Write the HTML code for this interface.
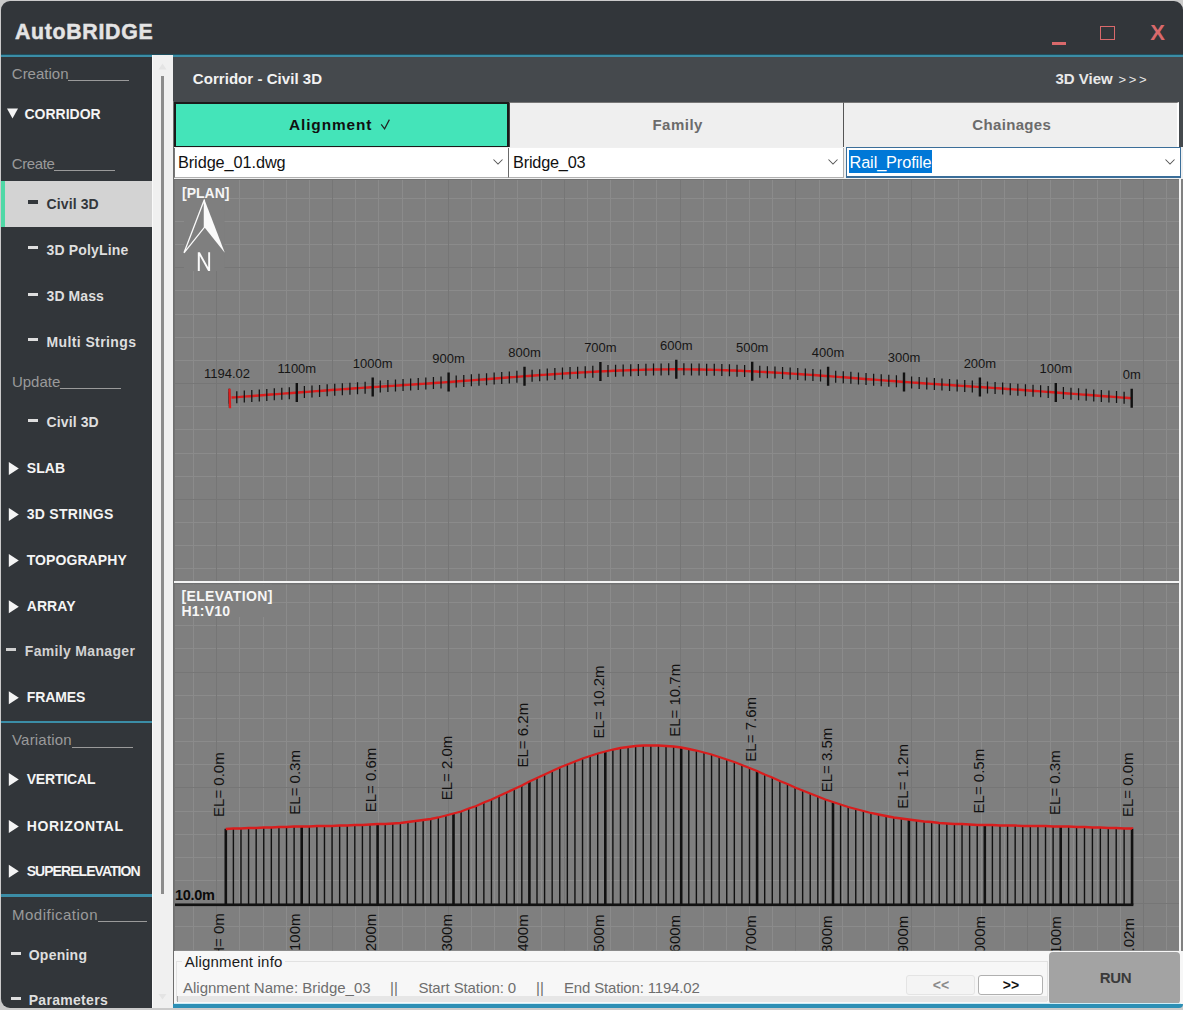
<!DOCTYPE html>
<html><head><meta charset="utf-8"><style>
html,body{margin:0;padding:0;}
body{width:1183px;height:1010px;position:relative;overflow:hidden;background:#cbcbcb;font-family:"Liberation Sans", sans-serif;}
</style></head><body>
<div style="position:absolute;left:1px;top:1px;width:1182px;height:1007px;background:#32363a;border-radius:9px;"></div>
<div style="position:absolute;left:14.9px;top:22.47px;font-size:21.3px;line-height:21.3px;color:#e4e4e4;font-weight:bold;white-space:nowrap;letter-spacing:0.72px;-webkit-text-stroke:0.5px #e4e4e4;">AutoBRIDGE</div>
<div style="position:absolute;left:1px;top:53.5px;width:1182px;height:1.2px;background:#1f4f5e;"></div>
<div style="position:absolute;left:1px;top:54.7px;width:1182px;height:2.7px;background:#3b8da6;"></div>
<div style="position:absolute;left:1052px;top:42px;width:14px;height:3px;background:#d9696b;"></div>
<div style="position:absolute;left:1100px;top:26px;width:12.5px;height:11.5px;background:transparent;border:1.7px solid #d9696b;"></div>
<svg style="position:absolute;left:0;top:0" width="1183" height="60"><text x="1150.2" y="40.2" font-family="Liberation Sans" font-weight="bold" font-size="22" fill="#d9696b">X</text></svg>
<div style="position:absolute;left:11.8px;top:66.00px;font-size:15px;line-height:15px;color:#9a9a9a;font-weight:normal;white-space:nowrap;">Creation</div>
<div style="position:absolute;left:68.4px;top:80px;width:60.19999999999999px;height:1px;background:#9a9a9a;"></div>
<svg style="position:absolute;left:0;top:0" width="160" height="1010"><path d="M7,108.5 L18,108.5 L12.5,118.5 Z" fill="#f4f4f4"/></svg>
<div style="position:absolute;left:24.5px;top:106.95px;font-size:14px;line-height:14px;color:#f4f4f4;font-weight:bold;white-space:nowrap;">CORRIDOR</div>
<div style="position:absolute;left:11.8px;top:156.00px;font-size:15px;line-height:15px;color:#9a9a9a;font-weight:normal;white-space:nowrap;letter-spacing:-0.4px;">Create</div>
<div style="position:absolute;left:54.3px;top:170px;width:60.7px;height:1px;background:#9a9a9a;"></div>
<div style="position:absolute;left:1px;top:181px;width:151px;height:46px;background:#d3d3d3;"></div>
<div style="position:absolute;left:1px;top:181px;width:4px;height:46px;background:#4fd8a6;"></div>
<div style="position:absolute;left:28px;top:200px;width:10px;height:4px;background:#33373b;"></div>
<div style="position:absolute;left:46.5px;top:196.95px;font-size:14px;line-height:14px;color:#33373b;font-weight:bold;white-space:nowrap;letter-spacing:0.12px;">Civil 3D</div>
<div style="position:absolute;left:28px;top:246.10000000000002px;width:10px;height:3.3px;background:#dedede;"></div>
<div style="position:absolute;left:46.5px;top:242.95px;font-size:14px;line-height:14px;color:#dedede;font-weight:bold;white-space:nowrap;letter-spacing:0.16px;">3D PolyLine</div>
<div style="position:absolute;left:28px;top:292.5px;width:10px;height:3.3px;background:#dedede;"></div>
<div style="position:absolute;left:46.5px;top:289.35px;font-size:14px;line-height:14px;color:#dedede;font-weight:bold;white-space:nowrap;letter-spacing:0.1px;">3D Mass</div>
<div style="position:absolute;left:28px;top:338.1px;width:10px;height:3.3px;background:#dedede;"></div>
<div style="position:absolute;left:46.5px;top:334.95px;font-size:14px;line-height:14px;color:#dedede;font-weight:bold;white-space:nowrap;letter-spacing:0.39px;">Multi Strings</div>
<div style="position:absolute;left:11.9px;top:373.90px;font-size:15px;line-height:15px;color:#9a9a9a;font-weight:normal;white-space:nowrap;">Update</div>
<div style="position:absolute;left:59.9px;top:388.2px;width:60.9px;height:1px;background:#9a9a9a;"></div>
<div style="position:absolute;left:28px;top:418.6px;width:10px;height:3.3px;background:#dedede;"></div>
<div style="position:absolute;left:46.5px;top:415.45px;font-size:14px;line-height:14px;color:#dedede;font-weight:bold;white-space:nowrap;letter-spacing:0.12px;">Civil 3D</div>
<svg style="position:absolute;left:0;top:0" width="160" height="1010"><path d="M8.8,462 L18.8,468.5 L8.8,475 Z" fill="#f4f4f4"/></svg>
<div style="position:absolute;left:26.7px;top:461.15px;font-size:14px;line-height:14px;color:#f4f4f4;font-weight:bold;white-space:nowrap;letter-spacing:0.1px;">SLAB</div>
<svg style="position:absolute;left:0;top:0" width="160" height="1010"><path d="M8.8,507.9 L18.8,514.4 L8.8,520.9 Z" fill="#f4f4f4"/></svg>
<div style="position:absolute;left:26.7px;top:507.05px;font-size:14px;line-height:14px;color:#f4f4f4;font-weight:bold;white-space:nowrap;letter-spacing:0.3px;">3D STRINGS</div>
<svg style="position:absolute;left:0;top:0" width="160" height="1010"><path d="M8.8,553.9 L18.8,560.4 L8.8,566.9 Z" fill="#f4f4f4"/></svg>
<div style="position:absolute;left:26.7px;top:553.05px;font-size:14px;line-height:14px;color:#f4f4f4;font-weight:bold;white-space:nowrap;letter-spacing:0.08px;">TOPOGRAPHY</div>
<svg style="position:absolute;left:0;top:0" width="160" height="1010"><path d="M8.8,600.2 L18.8,606.7 L8.8,613.2 Z" fill="#f4f4f4"/></svg>
<div style="position:absolute;left:26.7px;top:599.35px;font-size:14px;line-height:14px;color:#f4f4f4;font-weight:bold;white-space:nowrap;letter-spacing:0.08px;">ARRAY</div>
<div style="position:absolute;left:6px;top:648px;width:10px;height:3px;background:#d0d0d0;"></div>
<div style="position:absolute;left:24.8px;top:644.35px;font-size:14px;line-height:14px;color:#d2d2d2;font-weight:bold;white-space:nowrap;letter-spacing:0.33px;">Family Manager</div>
<svg style="position:absolute;left:0;top:0" width="160" height="1010"><path d="M8.8,691.3 L18.8,697.8 L8.8,704.3 Z" fill="#f4f4f4"/></svg>
<div style="position:absolute;left:26.7px;top:690.45px;font-size:14px;line-height:14px;color:#f4f4f4;font-weight:bold;white-space:nowrap;letter-spacing:-0.08px;">FRAMES</div>
<div style="position:absolute;left:1px;top:720.5px;width:151px;height:2.8px;background:#3b8da6;"></div>
<div style="position:absolute;left:12px;top:732.30px;font-size:15px;line-height:15px;color:#9a9a9a;font-weight:normal;white-space:nowrap;letter-spacing:0.2px;">Variation</div>
<div style="position:absolute;left:72.4px;top:746.8px;width:60.19999999999999px;height:1px;background:#9a9a9a;"></div>
<svg style="position:absolute;left:0;top:0" width="160" height="1010"><path d="M8.8,773 L18.8,779.5 L8.8,786 Z" fill="#f4f4f4"/></svg>
<div style="position:absolute;left:26.7px;top:772.15px;font-size:14px;line-height:14px;color:#f4f4f4;font-weight:bold;white-space:nowrap;letter-spacing:-0.16px;">VERTICAL</div>
<svg style="position:absolute;left:0;top:0" width="160" height="1010"><path d="M8.8,820 L18.8,826.5 L8.8,833 Z" fill="#f4f4f4"/></svg>
<div style="position:absolute;left:26.7px;top:819.15px;font-size:14px;line-height:14px;color:#f4f4f4;font-weight:bold;white-space:nowrap;letter-spacing:0.64px;">HORIZONTAL</div>
<svg style="position:absolute;left:0;top:0" width="160" height="1010"><path d="M8.8,864.8 L18.8,871.3 L8.8,877.8 Z" fill="#f4f4f4"/></svg>
<div style="position:absolute;left:26.7px;top:863.95px;font-size:14px;line-height:14px;color:#f4f4f4;font-weight:bold;white-space:nowrap;letter-spacing:-0.95px;">SUPERELEVATION</div>
<div style="position:absolute;left:1px;top:893.8px;width:151px;height:2.8px;background:#3b8da6;"></div>
<div style="position:absolute;left:12px;top:906.60px;font-size:15px;line-height:15px;color:#9a9a9a;font-weight:normal;white-space:nowrap;letter-spacing:0.5px;">Modification</div>
<div style="position:absolute;left:97.6px;top:921px;width:49.400000000000006px;height:1px;background:#9a9a9a;"></div>
<div style="position:absolute;left:11px;top:952px;width:10px;height:3px;background:#dedede;"></div>
<div style="position:absolute;left:28.7px;top:947.85px;font-size:14px;line-height:14px;color:#dedede;font-weight:bold;white-space:nowrap;letter-spacing:0.25px;">Opening</div>
<div style="position:absolute;left:11px;top:997px;width:10px;height:3px;background:#dedede;"></div>
<div style="position:absolute;left:28.7px;top:992.55px;font-size:14px;line-height:14px;color:#dedede;font-weight:bold;white-space:nowrap;letter-spacing:0.3px;">Parameters</div>
<div style="position:absolute;left:152px;top:54.8px;width:21px;height:953.2px;background:#f0f0f0;"></div>
<div style="position:absolute;left:152px;top:54.8px;width:0.8px;height:953.2px;background:#fafafa;"></div>
<div style="position:absolute;left:161px;top:76px;width:3px;height:818px;background:#8c8c8c;"></div>
<svg style="position:absolute;left:0;top:0" width="180" height="1010"><path d="M158.5,69.5 L162.5,63.5 L166.5,69.5 Z" fill="#e4e4e4"/><path d="M158.5,994 L162.5,999.5 L166.5,994 Z" fill="#e4e4e4"/></svg>
<div style="position:absolute;left:173px;top:57px;width:1010px;height:44.5px;background:#45494d;"></div>
<div style="position:absolute;left:192.8px;top:71.00px;font-size:15px;line-height:15px;color:#f2f2f2;font-weight:bold;white-space:nowrap;letter-spacing:0.05px;">Corridor - Civil 3D</div>
<div style="position:absolute;left:1055.5px;top:71.00px;font-size:15px;line-height:15px;color:#e8e8e8;font-weight:bold;white-space:nowrap;">3D View</div>
<div style="position:absolute;left:1118.5px;top:72.50px;font-size:13px;line-height:13px;color:#e8e8e8;font-weight:normal;white-space:nowrap;letter-spacing:-0.45px;">&gt; &gt; &gt;</div>
<div style="position:absolute;left:173px;top:101.5px;width:1010px;height:46px;background:#45494d;"></div>
<div style="position:absolute;left:174px;top:101.5px;width:335px;height:46.3px;background:#44e4b9;box-sizing:border-box;border:2px solid #1a1a1a;"></div>
<div style="position:absolute;left:289px;top:116.66px;font-size:15.4px;line-height:15.4px;color:#111;font-weight:bold;white-space:nowrap;letter-spacing:0.9px;">Alignment</div>
<svg style="position:absolute;left:0;top:0" width="400" height="150"><path d="M381.2,124.3 L384.6,128.9 L389.4,119.6" stroke="#222" stroke-width="1.2" fill="none"/></svg>
<div style="position:absolute;left:509px;top:101.5px;width:335px;height:46.3px;background:#efefef;box-sizing:border-box;border-top:1px solid #777;border-left:1px solid #444;border-bottom:1.5px solid #6a6a6a;"></div>
<div style="position:absolute;left:652.4px;top:116.90px;font-size:15px;line-height:15px;color:#6b6b6b;font-weight:bold;white-space:nowrap;letter-spacing:0.5px;">Family</div>
<div style="position:absolute;left:843px;top:101.5px;width:336px;height:46.3px;background:#efefef;box-sizing:border-box;border-top:1px solid #777;border-left:1.6px solid #555;border-right:2px solid #fff;border-bottom:1.5px solid #6a6a6a;"></div>
<div style="position:absolute;left:972.3px;top:117.20px;font-size:15px;line-height:15px;color:#6b6b6b;font-weight:bold;white-space:nowrap;letter-spacing:0.34px;">Chainages</div>
<div style="position:absolute;left:173px;top:147px;width:1010px;height:32px;background:#f0f0f0;"></div>
<div style="position:absolute;left:174px;top:147.5px;width:335px;height:30.5px;background:#fff;box-sizing:border-box;border:1px solid #b0b0b0;border-top:none;border-left:1.5px solid #777;"></div>
<div style="position:absolute;left:178px;top:153.80px;font-size:16.3px;line-height:16.3px;color:#111;font-weight:normal;white-space:nowrap;letter-spacing:-0.08px;">Bridge_01.dwg</div>
<svg style="position:absolute;left:0;top:0" width="1183" height="200"><path d="M493.5,159.5 L498.0,164.0 L502.5,159.5" stroke="#555" stroke-width="1.05" fill="none"/></svg>
<div style="position:absolute;left:508.3px;top:147.5px;width:335.5px;height:30.5px;background:#fff;box-sizing:border-box;border:1px solid #b0b0b0;border-top:none;border-left:1.6px solid #6a6a6a;"></div>
<div style="position:absolute;left:513px;top:153.80px;font-size:16.3px;line-height:16.3px;color:#111;font-weight:normal;white-space:nowrap;letter-spacing:-0.2px;">Bridge_03</div>
<svg style="position:absolute;left:0;top:0" width="1183" height="200"><path d="M828.5,159.5 L833.0,164.0 L837.5,159.5" stroke="#555" stroke-width="1.05" fill="none"/></svg>
<div style="position:absolute;left:846px;top:146.5px;width:334.5px;height:31px;background:#fff;box-sizing:border-box;border:1px solid #3b6e99;border-bottom:2px solid #3b6e99;"></div>
<div style="position:absolute;left:849px;top:150px;width:82.5px;height:22.5px;background:#0078d7;"></div>
<div style="position:absolute;left:849.5px;top:153.80px;font-size:16.3px;line-height:16.3px;color:#fff;font-weight:normal;white-space:nowrap;letter-spacing:-0.1px;">Rail_Profile</div>
<svg style="position:absolute;left:0;top:0" width="1183" height="200"><path d="M1165.5,159.5 L1170.0,164.0 L1174.5,159.5" stroke="#555" stroke-width="1.05" fill="none"/></svg>
<svg style="position:absolute;left:0;top:0" width="1183" height="1010" font-family='"Liberation Sans", sans-serif'><rect x="174" y="179" width="1006" height="403" fill="#737373"/><rect x="175" y="180" width="1004" height="401" fill="#7f7f7f"/><rect x="174" y="581" width="1006" height="2.3" fill="#f4f4f4"/><rect x="174" y="583.3" width="1006" height="368" fill="#737373"/><rect x="175" y="584.5" width="1004" height="366" fill="#7f7f7f"/><rect x="1179" y="179" width="2" height="825" fill="#f4f4f4"/><rect x="1181" y="179" width="2" height="825" fill="#808080"/><path d="M193.5,180 V581 M239.5,180 V581 M263.5,180 V581 M286.5,180 V581 M309.5,180 V581 M355.5,180 V581 M378.5,180 V581 M402.5,180 V581 M425.5,180 V581 M471.5,180 V581 M494.5,180 V581 M517.5,180 V581 M541.5,180 V581 M587.5,180 V581 M610.5,180 V581 M633.5,180 V581 M656.5,180 V581 M703.5,180 V581 M726.5,180 V581 M749.5,180 V581 M772.5,180 V581 M819.5,180 V581 M842.5,180 V581 M865.5,180 V581 M888.5,180 V581 M934.5,180 V581 M958.5,180 V581 M981.5,180 V581 M1004.5,180 V581 M1050.5,180 V581 M1073.5,180 V581 M1097.5,180 V581 M1120.5,180 V581 M1166.5,180 V581 M175,198.5 H1179 M175,221.5 H1179 M175,244.5 H1179 M175,290.5 H1179 M175,314.5 H1179 M175,337.5 H1179 M175,360.5 H1179 M175,406.5 H1179 M175,429.5 H1179 M175,453.5 H1179 M175,476.5 H1179 M175,522.5 H1179 M175,545.5 H1179 M175,568.5 H1179" stroke="#8b8b8b" stroke-width="1" fill="none"/><path d="M216.5,180 V581 M332.5,180 V581 M448.5,180 V581 M564.5,180 V581 M680.5,180 V581 M795.5,180 V581 M911.5,180 V581 M1027.5,180 V581 M1143.5,180 V581 M175,267.5 H1179 M175,383.5 H1179 M175,499.5 H1179" stroke="#767676" stroke-width="1" fill="none"/><path d="M193.5,584.5 V950.5 M239.5,584.5 V950.5 M263.5,584.5 V950.5 M286.5,584.5 V950.5 M309.5,584.5 V950.5 M355.5,584.5 V950.5 M378.5,584.5 V950.5 M402.5,584.5 V950.5 M425.5,584.5 V950.5 M471.5,584.5 V950.5 M494.5,584.5 V950.5 M517.5,584.5 V950.5 M541.5,584.5 V950.5 M587.5,584.5 V950.5 M610.5,584.5 V950.5 M633.5,584.5 V950.5 M656.5,584.5 V950.5 M703.5,584.5 V950.5 M726.5,584.5 V950.5 M749.5,584.5 V950.5 M772.5,584.5 V950.5 M819.5,584.5 V950.5 M842.5,584.5 V950.5 M865.5,584.5 V950.5 M888.5,584.5 V950.5 M934.5,584.5 V950.5 M958.5,584.5 V950.5 M981.5,584.5 V950.5 M1004.5,584.5 V950.5 M1050.5,584.5 V950.5 M1073.5,584.5 V950.5 M1097.5,584.5 V950.5 M1120.5,584.5 V950.5 M1166.5,584.5 V950.5 M175,602.5 H1179 M175,625.5 H1179 M175,648.5 H1179 M175,695.5 H1179 M175,718.5 H1179 M175,741.5 H1179 M175,764.5 H1179 M175,811.5 H1179 M175,834.5 H1179 M175,857.5 H1179 M175,880.5 H1179 M175,926.5 H1179 M175,950.5 H1179" stroke="#8b8b8b" stroke-width="1" fill="none"/><path d="M216.5,584.5 V950.5 M332.5,584.5 V950.5 M448.5,584.5 V950.5 M564.5,584.5 V950.5 M680.5,584.5 V950.5 M795.5,584.5 V950.5 M911.5,584.5 V950.5 M1027.5,584.5 V950.5 M1143.5,584.5 V950.5 M175,672.5 H1179 M175,787.5 H1179 M175,903.5 H1179" stroke="#767676" stroke-width="1" fill="none"/><rect x="175" y="584.5" width="97" height="32.5" fill="#7f7f7f"/><rect x="175" y="180" width="52.5" height="21" fill="#7f7f7f"/><rect x="184" y="180" width="40.5" height="91" fill="#7f7f7f"/><polyline points="1131.70,398.28 1128.67,398.05 1125.64,397.81 1122.61,397.58 1119.58,397.35 1116.55,397.12 1113.51,396.89 1110.48,396.66 1107.45,396.43 1104.42,396.19 1101.39,395.96 1098.36,395.73 1095.33,395.50 1092.30,395.27 1089.27,395.04 1086.24,394.81 1083.20,394.58 1080.17,394.35 1077.14,394.12 1074.11,393.89 1071.08,393.66 1068.05,393.43 1065.02,393.20 1061.99,392.98 1058.96,392.75 1055.93,392.52 1052.89,392.29 1049.86,392.06 1046.83,391.84 1043.80,391.61 1040.77,391.38 1037.74,391.16 1034.71,390.93 1031.68,390.71 1028.65,390.49 1025.62,390.26 1022.58,390.04 1019.55,389.82 1016.52,389.60 1013.49,389.38 1010.46,389.16 1007.43,388.94 1004.40,388.73 1001.37,388.51 998.34,388.30 995.31,388.09 992.28,387.87 989.24,387.66 986.21,387.46 983.18,387.25 980.15,387.04 977.12,386.84 974.09,386.64 971.06,386.43 968.03,386.23 965.00,386.03 961.97,385.83 958.93,385.63 955.90,385.44 952.87,385.24 949.84,385.04 946.81,384.84 943.78,384.64 940.75,384.44 937.72,384.24 934.69,384.04 931.66,383.84 928.62,383.64 925.59,383.43 922.56,383.23 919.53,383.02 916.50,382.81 913.47,382.60 910.44,382.39 907.41,382.17 904.38,381.96 901.35,381.73 898.32,381.51 895.28,381.29 892.25,381.06 889.22,380.83 886.19,380.60 883.16,380.37 880.13,380.14 877.10,379.90 874.07,379.67 871.04,379.43 868.01,379.20 864.97,378.96 861.94,378.73 858.91,378.49 855.88,378.25 852.85,378.02 849.82,377.78 846.79,377.55 843.76,377.32 840.73,377.08 837.70,376.85 834.66,376.62 831.63,376.40 828.60,376.17 825.57,375.95 822.54,375.73 819.51,375.51 816.48,375.29 813.45,375.07 810.42,374.86 807.39,374.65 804.35,374.45 801.32,374.24 798.29,374.04 795.26,373.84 792.23,373.64 789.20,373.45 786.17,373.26 783.14,373.07 780.11,372.89 777.08,372.71 774.05,372.53 771.01,372.36 767.98,372.19 764.95,372.02 761.92,371.86 758.89,371.70 755.86,371.54 752.83,371.39 749.80,371.24 746.77,371.10 743.74,370.96 740.70,370.82 737.67,370.69 734.64,370.57 731.61,370.45 728.58,370.33 725.55,370.22 722.52,370.12 719.49,370.02 716.46,369.92 713.43,369.83 710.39,369.75 707.36,369.68 704.33,369.61 701.30,369.54 698.27,369.49 695.24,369.44 692.21,369.40 689.18,369.36 686.15,369.34 683.12,369.32 680.08,369.30 677.05,369.30 674.02,369.30 670.99,369.32 667.96,369.34 664.93,369.36 661.90,369.40 658.87,369.44 655.84,369.49 652.81,369.54 649.78,369.61 646.74,369.67 643.71,369.75 640.68,369.83 637.65,369.92 634.62,370.01 631.59,370.11 628.56,370.22 625.53,370.33 622.50,370.44 619.47,370.56 616.43,370.69 613.40,370.82 610.37,370.96 607.34,371.09 604.31,371.24 601.28,371.39 598.25,371.54 595.22,371.69 592.19,371.85 589.16,372.02 586.12,372.18 583.09,372.35 580.06,372.53 577.03,372.70 574.00,372.88 570.97,373.07 567.94,373.25 564.91,373.44 561.88,373.64 558.85,373.83 555.81,374.03 552.78,374.23 549.75,374.44 546.72,374.65 543.69,374.85 540.66,375.07 537.63,375.28 534.60,375.50 531.57,375.72 528.54,375.94 525.51,376.16 522.47,376.39 519.44,376.62 516.41,376.84 513.38,377.08 510.35,377.31 507.32,377.54 504.29,377.77 501.26,378.01 498.23,378.25 495.20,378.48 492.16,378.72 489.13,378.95 486.10,379.19 483.07,379.43 480.04,379.66 477.01,379.90 473.98,380.13 470.95,380.36 467.92,380.59 464.89,380.82 461.85,381.05 458.82,381.28 455.79,381.50 452.76,381.73 449.73,381.95 446.70,382.17 443.67,382.38 440.64,382.59 437.61,382.80 434.58,383.01 431.55,383.22 428.51,383.43 425.48,383.63 422.45,383.83 419.42,384.03 416.39,384.24 413.36,384.44 410.33,384.63 407.30,384.83 404.27,385.03 401.24,385.23 398.20,385.43 395.17,385.63 392.14,385.83 389.11,386.03 386.08,386.23 383.05,386.43 380.02,386.63 376.99,386.83 373.96,387.04 370.93,387.24 367.89,387.45 364.86,387.66 361.83,387.87 358.80,388.08 355.77,388.29 352.74,388.50 349.71,388.72 346.68,388.94 343.65,389.15 340.62,389.37 337.58,389.59 334.55,389.81 331.52,390.03 328.49,390.25 325.46,390.48 322.43,390.70 319.40,390.93 316.37,391.15 313.34,391.38 310.31,391.60 307.28,391.83 304.24,392.06 301.21,392.28 298.18,392.51 295.15,392.74 292.12,392.97 289.09,393.20 286.06,393.42 283.03,393.65 280.00,393.88 276.97,394.11 273.93,394.34 270.90,394.57 267.87,394.80 264.84,395.03 261.81,395.26 258.78,395.49 255.75,395.72 252.72,395.96 249.69,396.19 246.66,396.42 243.62,396.65 240.59,396.88 237.56,397.11 234.53,397.34 231.50,397.57" stroke="#d91d1d" stroke-width="2.4" fill="none"/><path d="M1124.11,391.70 L1124.11,403.70 M1116.52,391.12 L1116.52,403.12 M1108.93,390.54 L1108.93,402.54 M1101.34,389.96 L1101.34,401.96 M1093.75,389.38 L1093.75,401.38 M1086.16,388.81 L1086.16,400.81 M1078.57,388.23 L1078.57,400.23 M1070.98,387.65 L1070.98,399.65 M1063.39,387.08 L1063.39,399.08 M1048.21,385.94 L1048.21,397.94 M1040.62,385.37 L1040.62,397.37 M1033.03,384.81 L1033.03,396.81 M1025.44,384.25 L1025.44,396.25 M1017.85,383.70 L1017.85,395.70 M1010.26,383.15 L1010.26,395.15 M1002.67,382.60 L1002.67,394.60 M995.08,382.07 L995.08,394.07 M987.49,381.54 L987.49,393.54 M972.31,380.52 L972.31,392.52 M964.72,380.01 L964.72,392.01 M957.13,379.52 L957.13,391.52 M949.54,379.02 L949.54,391.02 M941.95,378.52 L941.95,390.52 M934.36,378.02 L934.36,390.02 M926.77,377.51 L926.77,389.51 M919.18,377.00 L919.18,389.00 M911.59,376.47 L911.59,388.47 M896.41,375.37 L896.41,387.37 M888.82,374.80 L888.82,386.80 M881.23,374.22 L881.23,386.22 M873.64,373.64 L873.64,385.64 M866.05,373.05 L866.05,385.05 M858.46,372.45 L858.46,384.45 M850.87,371.86 L850.87,383.86 M843.28,371.28 L843.28,383.28 M835.69,370.70 L835.69,382.70 M820.51,369.58 L820.51,381.58 M812.92,369.04 L812.92,381.04 M805.33,368.51 L805.33,380.51 M797.74,368.00 L797.74,380.00 M790.15,367.51 L790.15,379.51 M782.56,367.04 L782.56,379.04 M774.97,366.59 L774.97,378.59 M767.38,366.16 L767.38,378.16 M759.79,365.75 L759.79,377.75 M744.61,365.00 L744.61,377.00 M737.02,364.67 L737.02,376.67 M729.43,364.36 L729.43,376.36 M721.84,364.09 L721.84,376.09 M714.25,363.86 L714.25,375.86 M706.66,363.66 L706.66,375.66 M699.07,363.50 L699.07,375.50 M691.48,363.39 L691.48,375.39 M683.89,363.32 L683.89,375.32 M668.71,363.33 L668.71,375.33 M661.12,363.41 L661.12,375.41 M653.53,363.53 L653.53,375.53 M645.94,363.69 L645.94,375.69 M638.35,363.90 L638.35,375.90 M630.76,364.14 L630.76,376.14 M623.17,364.42 L623.17,376.42 M615.58,364.73 L615.58,376.73 M607.99,365.06 L607.99,377.06 M592.81,365.82 L592.81,377.82 M585.22,366.23 L585.22,378.23 M577.63,366.67 L577.63,378.67 M570.04,367.12 L570.04,379.12 M562.45,367.60 L562.45,379.60 M554.86,368.10 L554.86,380.10 M547.27,368.61 L547.27,380.61 M539.68,369.14 L539.68,381.14 M532.09,369.68 L532.09,381.68 M516.91,370.81 L516.91,382.81 M509.32,371.39 L509.32,383.39 M501.73,371.97 L501.73,383.97 M494.14,372.56 L494.14,384.56 M486.55,373.16 L486.55,385.16 M478.96,373.75 L478.96,385.75 M471.37,374.33 L471.37,386.33 M463.78,374.91 L463.78,386.91 M456.19,375.48 L456.19,387.48 M441.01,376.57 L441.01,388.57 M433.42,377.09 L433.42,389.09 M425.83,377.61 L425.83,389.61 M418.24,378.11 L418.24,390.11 M410.65,378.61 L410.65,390.61 M403.06,379.11 L403.06,391.11 M395.47,379.61 L395.47,391.61 M387.88,380.11 L387.88,392.11 M380.29,380.61 L380.29,392.61 M365.11,381.64 L365.11,393.64 M357.52,382.17 L357.52,394.17 M349.93,382.70 L349.93,394.70 M342.34,383.25 L342.34,395.25 M334.75,383.80 L334.75,395.80 M327.16,384.35 L327.16,396.35 M319.57,384.91 L319.57,396.91 M311.98,385.48 L311.98,397.48 M304.39,386.04 L304.39,398.04 M289.30,387.18 L289.30,399.18 M281.80,387.75 L281.80,399.75 M274.30,388.32 L274.30,400.32 M266.80,388.88 L266.80,400.88 M259.30,389.45 L259.30,401.45 M251.80,390.03 L251.80,402.03 M244.30,390.60 L244.30,402.60 M236.80,391.17 L236.80,403.17 M229.30,391.74 L229.30,403.74" stroke="#111" stroke-width="1.25" fill="none"/><path d="M1131.70,388.78 L1131.70,407.78 M1055.80,383.01 L1055.80,402.01 M979.90,377.53 L979.90,396.53 M904.00,372.43 L904.00,391.43 M828.10,366.63 L828.10,385.63 M752.20,361.86 L752.20,380.86 M676.30,359.80 L676.30,378.80 M600.40,361.93 L600.40,380.93 M524.50,366.74 L524.50,385.74 M448.60,372.53 L448.60,391.53 M372.70,377.62 L372.70,396.62 M296.80,383.12 L296.80,402.12" stroke="#111" stroke-width="2.4" fill="none"/><path d="M229.3,388.74245552200796 L229.60000000000002,407.74245552200796" stroke="#111" stroke-width="1.6" fill="none"/><path d="M229.5,388.74245552200796 L230.10000000000002,408.24245552200796" stroke="#e01b1b" stroke-width="2.2" fill="none"/><text x="1131.70" y="378.78" font-size="13" text-anchor="middle" fill="#161616">0m</text><text x="1055.80" y="373.01" font-size="13" text-anchor="middle" fill="#161616">100m</text><text x="979.90" y="367.53" font-size="13" text-anchor="middle" fill="#161616">200m</text><text x="904.00" y="362.43" font-size="13" text-anchor="middle" fill="#161616">300m</text><text x="828.10" y="356.63" font-size="13" text-anchor="middle" fill="#161616">400m</text><text x="752.20" y="351.86" font-size="13" text-anchor="middle" fill="#161616">500m</text><text x="676.30" y="349.80" font-size="13" text-anchor="middle" fill="#161616">600m</text><text x="600.40" y="351.93" font-size="13" text-anchor="middle" fill="#161616">700m</text><text x="524.50" y="356.74" font-size="13" text-anchor="middle" fill="#161616">800m</text><text x="448.60" y="362.53" font-size="13" text-anchor="middle" fill="#161616">900m</text><text x="372.70" y="367.62" font-size="13" text-anchor="middle" fill="#161616">1000m</text><text x="296.80" y="373.12" font-size="13" text-anchor="middle" fill="#161616">1100m</text><text x="227" y="378.24" font-size="13" text-anchor="middle" fill="#161616">1194.02</text><text x="182" y="197.8" font-size="14" font-weight="bold" fill="#f6f6f6">[PLAN]</text><path d="M204.4,199.5 L224.8,252.8 L204.4,227.3 Z" fill="#fafafa"/><path d="M204.4,199.5 L184,252.8 L204.4,227.3 Z" fill="none" stroke="#fafafa" stroke-width="1.3" stroke-linejoin="miter"/><path d="M197.8,271 V252.3 H199.9 L208.2,267.2 V252.3 H210.1 V271 H208.1 L199.8,256.1 V271 Z" fill="#fafafa"/><path d="M233.39,828.55 V904.8 M240.98,828.30 V904.8 M248.57,828.06 V904.8 M256.16,827.82 V904.8 M263.75,827.58 V904.8 M271.34,827.35 V904.8 M278.93,827.13 V904.8 M286.52,826.92 V904.8 M294.11,826.71 V904.8 M309.29,826.34 V904.8 M316.88,826.17 V904.8 M324.47,825.99 V904.8 M332.06,825.81 V904.8 M339.65,825.62 V904.8 M347.24,825.41 V904.8 M354.83,825.17 V904.8 M362.42,824.90 V904.8 M370.01,824.60 V904.8 M385.19,823.84 V904.8 M392.78,823.36 V904.8 M400.37,822.78 V904.8 M407.96,822.06 V904.8 M415.55,821.20 V904.8 M423.14,820.15 V904.8 M430.73,818.89 V904.8 M438.32,817.40 V904.8 M445.91,815.65 V904.8 M461.09,811.28 V904.8 M468.68,808.67 V904.8 M476.27,805.81 V904.8 M483.86,802.74 V904.8 M491.45,799.49 V904.8 M499.04,796.10 V904.8 M506.63,792.59 V904.8 M514.22,789.01 V904.8 M521.81,785.38 V904.8 M536.99,778.12 V904.8 M544.58,774.56 V904.8 M552.17,771.07 V904.8 M559.76,767.69 V904.8 M567.35,764.45 V904.8 M574.94,761.38 V904.8 M582.53,758.51 V904.8 M590.12,755.87 V904.8 M597.71,753.48 V904.8 M612.89,749.59 V904.8 M620.48,748.12 V904.8 M628.07,746.96 V904.8 M635.66,746.11 V904.8 M643.25,745.58 V904.8 M650.84,745.36 V904.8 M658.43,745.45 V904.8 M666.02,745.85 V904.8 M673.61,746.56 V904.8 M688.79,748.92 V904.8 M696.38,750.53 V904.8 M703.97,752.42 V904.8 M711.56,754.54 V904.8 M719.15,756.88 V904.8 M726.74,759.43 V904.8 M734.33,762.14 V904.8 M741.92,765.01 V904.8 M749.51,768.01 V904.8 M764.69,774.31 V904.8 M772.28,777.55 V904.8 M779.87,780.83 V904.8 M787.46,784.11 V904.8 M795.05,787.36 V904.8 M802.64,790.56 V904.8 M810.23,793.67 V904.8 M817.82,796.67 V904.8 M825.41,799.54 V904.8 M840.59,804.74 V904.8 M848.18,807.06 V904.8 M855.77,809.20 V904.8 M863.36,811.17 V904.8 M870.95,812.97 V904.8 M878.54,814.60 V904.8 M886.13,816.09 V904.8 M893.72,817.43 V904.8 M901.31,818.63 V904.8 M916.49,820.63 V904.8 M924.08,821.46 V904.8 M931.67,822.17 V904.8 M939.26,822.80 V904.8 M946.85,823.33 V904.8 M954.44,823.78 V904.8 M962.03,824.17 V904.8 M969.62,824.49 V904.8 M977.21,824.77 V904.8 M992.39,825.21 V904.8 M999.98,825.39 V904.8 M1007.57,825.54 V904.8 M1015.16,825.69 V904.8 M1022.75,825.82 V904.8 M1030.34,825.95 V904.8 M1037.93,826.08 V904.8 M1045.52,826.21 V904.8 M1053.11,826.36 V904.8 M1068.63,826.71 V904.8 M1076.56,826.91 V904.8 M1084.49,827.13 V904.8 M1092.42,827.37 V904.8 M1100.35,827.62 V904.8 M1108.27,827.87 V904.8 M1116.20,828.14 V904.8 M1124.13,828.41 V904.8 M1132.06,828.69 V904.8" stroke="#111" stroke-width="1.4" fill="none"/><path d="M225.80,828.80 V904.8 M301.70,826.52 V904.8 M377.60,824.25 V904.8 M453.50,813.62 V904.8 M529.40,781.74 V904.8 M605.30,751.38 V904.8 M681.20,747.59 V904.8 M757.10,771.12 V904.8 M833.00,802.23 V904.8 M908.90,819.69 V904.8 M984.80,825.00 V904.8 M1060.70,826.52 V904.8 M1132.06,828.80 V904.8" stroke="#111" stroke-width="2.6" fill="none"/><rect x="175" y="903.5" width="958.36" height="2.6" fill="#111"/><polyline points="225.80,829.00 233.39,828.50 240.98,828.50 248.57,828.00 256.16,828.00 263.75,827.50 271.34,827.50 278.93,827.00 286.52,827.00 294.11,826.50 301.70,826.50 309.29,826.50 316.88,826.00 324.47,826.00 332.06,826.00 339.65,825.50 347.24,825.50 354.83,825.00 362.42,825.00 370.01,824.50 377.60,824.00 385.19,824.00 392.78,823.50 400.37,823.00 407.96,822.00 415.55,821.00 423.14,820.00 430.73,819.00 438.32,817.50 445.91,815.50 453.50,813.50 461.09,811.50 468.68,808.50 476.27,806.00 483.86,802.50 491.45,799.50 499.04,796.00 506.63,792.50 514.22,789.00 521.81,785.50 529.40,781.50 536.99,778.00 544.58,774.50 552.17,771.00 559.76,767.50 567.35,764.50 574.94,761.50 582.53,758.50 590.12,756.00 597.71,753.50 605.30,751.50 612.89,749.50 620.48,748.00 628.07,747.00 635.66,746.00 643.25,745.50 650.84,745.50 658.43,745.50 666.02,746.00 673.61,746.50 681.20,747.50 688.79,749.00 696.38,750.50 703.97,752.50 711.56,754.50 719.15,757.00 726.74,759.50 734.33,762.00 741.92,765.00 749.51,768.00 757.10,771.00 764.69,774.50 772.28,777.50 779.87,781.00 787.46,784.00 795.05,787.50 802.64,790.50 810.23,793.50 817.82,796.50 825.41,799.50 833.00,802.00 840.59,804.50 848.18,807.00 855.77,809.00 863.36,811.00 870.95,813.00 878.54,814.50 886.13,816.00 893.72,817.50 901.31,818.50 908.90,819.50 916.49,820.50 924.08,821.50 931.67,822.00 939.26,823.00 946.85,823.50 954.44,824.00 962.03,824.00 969.62,824.50 977.21,825.00 984.80,825.00 992.39,825.00 999.98,825.50 1007.57,825.50 1015.16,825.50 1022.75,826.00 1030.34,826.00 1037.93,826.00 1045.52,826.00 1053.11,826.50 1060.70,826.50 1068.63,826.50 1076.56,827.00 1084.49,827.00 1092.42,827.50 1100.35,827.50 1108.27,828.00 1116.20,828.00 1124.13,828.50 1132.06,828.50 1132.06,829.00" stroke="#d91d1d" stroke-width="2.3" fill="none"/><text transform="translate(224.00,816.93) rotate(-90)" font-size="15" fill="#111">EL= 0.0m</text><text transform="translate(300.03,814.70) rotate(-90)" font-size="15" fill="#111">EL= 0.3m</text><text transform="translate(376.06,812.27) rotate(-90)" font-size="15" fill="#111">EL= 0.6m</text><text transform="translate(452.09,800.32) rotate(-90)" font-size="15" fill="#111">EL= 2.0m</text><text transform="translate(528.12,767.50) rotate(-90)" font-size="15" fill="#111">EL= 6.2m</text><text transform="translate(604.15,738.40) rotate(-90)" font-size="15" fill="#111">EL= 10.2m</text><text transform="translate(680.18,736.79) rotate(-90)" font-size="15" fill="#111">EL= 10.7m</text><text transform="translate(756.21,761.64) rotate(-90)" font-size="15" fill="#111">EL= 7.6m</text><text transform="translate(832.24,792.31) rotate(-90)" font-size="15" fill="#111">EL= 3.5m</text><text transform="translate(908.27,808.66) rotate(-90)" font-size="15" fill="#111">EL= 1.2m</text><text transform="translate(984.30,813.45) rotate(-90)" font-size="15" fill="#111">EL= 0.5m</text><text transform="translate(1060.33,814.95) rotate(-90)" font-size="15" fill="#111">EL= 0.3m</text><text transform="translate(1133.11,817.10) rotate(-90)" font-size="15" fill="#111">EL= 0.0m</text><clipPath id="ec"><rect x="175" y="584.5" width="1004" height="366"/></clipPath><g clip-path="url(#ec)"><text transform="translate(224.00,913.20) rotate(-90)" font-size="15" text-anchor="end" fill="#111">CH= 0m</text><text transform="translate(300.05,913.48) rotate(-90)" font-size="15" text-anchor="end" fill="#111">100m</text><text transform="translate(376.10,913.76) rotate(-90)" font-size="15" text-anchor="end" fill="#111">200m</text><text transform="translate(452.15,914.04) rotate(-90)" font-size="15" text-anchor="end" fill="#111">300m</text><text transform="translate(528.20,914.32) rotate(-90)" font-size="15" text-anchor="end" fill="#111">400m</text><text transform="translate(604.25,914.60) rotate(-90)" font-size="15" text-anchor="end" fill="#111">500m</text><text transform="translate(680.30,914.88) rotate(-90)" font-size="15" text-anchor="end" fill="#111">600m</text><text transform="translate(756.35,915.16) rotate(-90)" font-size="15" text-anchor="end" fill="#111">700m</text><text transform="translate(832.40,915.44) rotate(-90)" font-size="15" text-anchor="end" fill="#111">800m</text><text transform="translate(908.45,915.72) rotate(-90)" font-size="15" text-anchor="end" fill="#111">900m</text><text transform="translate(984.50,916.00) rotate(-90)" font-size="15" text-anchor="end" fill="#111">1000m</text><text transform="translate(1060.55,916.28) rotate(-90)" font-size="15" text-anchor="end" fill="#111">1100m</text><text transform="translate(1134.05,918.04) rotate(-90)" font-size="15" text-anchor="end" fill="#111">.02m</text></g><text x="175" y="899.5" font-size="14.5" font-weight="bold" letter-spacing="-0.3" fill="#0a0a0a">10.0m</text><text x="181.5" y="600.8" font-size="14" font-weight="bold" letter-spacing="0.35" fill="#f6f6f6">[ELEVATION]</text><text x="181.5" y="615.5" font-size="14" font-weight="bold" letter-spacing="0.2" fill="#f6f6f6">H1:V10</text></svg>
<div style="position:absolute;left:173px;top:950.5px;width:1010px;height:53.5px;background:#f7f7f7;"></div>
<div style="position:absolute;left:175.5px;top:961px;width:872px;height:40px;box-sizing:border-box;border:1px solid #e2e2e2;border-bottom:none;"></div>
<div style="position:absolute;left:182px;top:955px;width:103px;height:12px;background:#f7f7f7;"></div>
<div style="position:absolute;left:184.7px;top:954.30px;font-size:15px;line-height:15px;color:#1a1a1a;font-weight:normal;white-space:nowrap;letter-spacing:0.2px;">Alignment info</div>
<div style="position:absolute;left:183px;top:980.00px;font-size:15px;line-height:15px;color:#6e6e6e;font-weight:normal;white-space:nowrap;">Alignment Name: Bridge_03</div>
<div style="position:absolute;left:390px;top:980.00px;font-size:15px;line-height:15px;color:#6e6e6e;font-weight:normal;white-space:nowrap;">||</div>
<div style="position:absolute;left:418.4px;top:980.00px;font-size:15px;line-height:15px;color:#6e6e6e;font-weight:normal;white-space:nowrap;letter-spacing:-0.1px;">Start Station: 0</div>
<div style="position:absolute;left:536px;top:980.00px;font-size:15px;line-height:15px;color:#6e6e6e;font-weight:normal;white-space:nowrap;">||</div>
<div style="position:absolute;left:564px;top:980.00px;font-size:15px;line-height:15px;color:#6e6e6e;font-weight:normal;white-space:nowrap;letter-spacing:-0.17px;">End Station: 1194.02</div>
<div style="position:absolute;left:177px;top:996.3px;width:870px;height:5.7px;background:#e6e6e6;"></div>
<div style="position:absolute;left:177px;top:996.3px;width:1px;height:5.7px;background:#a8a8a8;"></div>
<div style="position:absolute;left:906px;top:975px;width:69px;height:19.5px;background:#f4f4f4;box-sizing:border-box;border:1px solid #e4e4e4;border-radius:3px;"></div>
<div style="position:absolute;left:541px;width:800px;text-align:center;top:977.65px;font-size:14px;line-height:14px;color:#8a8a8a;font-weight:bold;white-space:nowrap;">&lt;&lt;</div>
<div style="position:absolute;left:978.2px;top:975px;width:65px;height:19.5px;background:#ffffff;box-sizing:border-box;border:1px solid #b0b0b0;border-radius:3px;"></div>
<div style="position:absolute;left:611px;width:800px;text-align:center;top:977.65px;font-size:14px;line-height:14px;color:#111;font-weight:bold;white-space:nowrap;">&gt;&gt;</div>
<div style="position:absolute;left:1049px;top:952px;width:131px;height:52px;background:#a3a3a3;border-radius:4px;"></div>
<div style="position:absolute;left:1099.8px;top:970.30px;font-size:15px;line-height:15px;color:#3a3a3a;font-weight:bold;white-space:nowrap;letter-spacing:-0.4px;">RUN</div>
<div style="position:absolute;left:173px;top:1003px;width:1008px;height:1px;background:#cdeef8;"></div>
<div style="position:absolute;left:173px;top:101px;width:1px;height:907px;background:#6e6e6e;"></div>
<div style="position:absolute;left:173px;top:1004px;width:1010px;height:4px;background:#2c8fb5;border-bottom-right-radius:4px;"></div>
</body></html>
